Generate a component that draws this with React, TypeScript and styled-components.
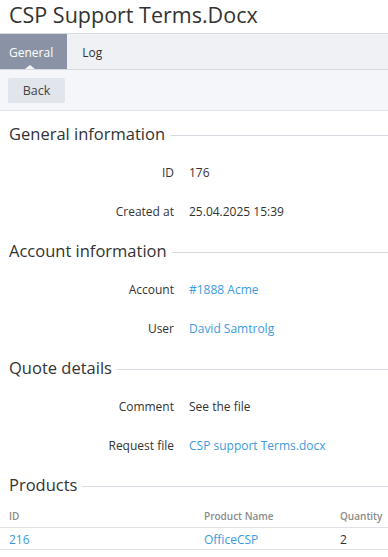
import styled, { createGlobalStyle } from 'styled-components';

const GlobalStyle = createGlobalStyle`
    body {
        margin: 0;
        background: #ffffff;
        font-family: "Open Sans", "Noto Sans", sans-serif;
        color: #333333;
    }
`;

const Page = styled.div`
    display: flex;
    flex-direction: column;
    width: 388px;
`;

const Title = styled.h1`
    margin: 0;
    height: 33px;
    padding-left: 9px;
    font-size: 21.5px;
    font-weight: 400;
    line-height: 30px;
    color: #333333;
`;

const TabBar = styled.nav`
    display: flex;
    height: 35px;
    background-color: #eff1f5;
    border-top: 1px solid #d6dae1;
    border-bottom: 1px solid #d6dae1;
`;

const Tab = styled.div<{ $active?: boolean }>`
    position: relative;
    display: flex;
    align-items: center;
    padding: 1px 14px 0 ${p => (p.$active ? '9px' : '15px')};
    font-size: 12px;
    color: ${p => (p.$active ? '#ffffff' : '#333333')};
    background-color: ${p => (p.$active ? '#8a93a5' : 'transparent')};

    &::after {
        content: '';
        display: ${p => (p.$active ? 'block' : 'none')};
        position: absolute;
        left: 25px;
        bottom: 0;
        border-left: 5px solid transparent;
        border-right: 5px solid transparent;
        border-bottom: 4px solid #f5f6f9;
    }
`;

const Toolbar = styled.div`
    display: flex;
    align-items: center;
    height: 40px;
    padding-left: 8px;
    background-color: #f5f6f9;
    border-bottom: 1px solid #e0e3e9;
`;

const Button = styled.button`
    height: 25px;
    width: 57px;
    border: none;
    border-radius: 2px;
    background-color: #e1e5ec;
    font-family: inherit;
    font-size: 12.5px;
    color: #444444;
    cursor: pointer;
`;

const Content = styled.div`
    display: flex;
    flex-direction: column;
    padding-top: 3px;
`;

const SectionTitle = styled.h2`
    display: flex;
    align-items: center;
    gap: 5px;
    margin: 0;
    height: 39px;
    padding-left: 9px;
    font-size: 16.5px;
    font-weight: 400;
    color: #333333;

    &::after {
        content: '';
        flex: 1;
        height: 1px;
        margin-top: 3px;
        background-color: #d6dae1;
    }
`;

const Row = styled.div`
    display: grid;
    grid-template-columns: 174px 1fr;
    column-gap: 15px;
    align-items: center;
    height: 39px;
    font-size: 12px;
`;

const Label = styled.span`
    text-align: right;
    color: #333333;
`;

const Value = styled.span`
    color: #333333;
`;

const Link = styled.a`
    color: #3d9be0;
    text-decoration: none;
`;

const Table = styled.div`
    display: flex;
    flex-direction: column;
`;

const TableRow = styled.div<{ $head?: boolean }>`
    display: grid;
    grid-template-columns: 195px 136px 1fr;
    align-items: center;
    height: ${p => (p.$head ? '23px' : '20px')};
    padding-left: 9px;
    padding-top: ${p => (p.$head ? '0' : '1px')};
    border-bottom: 1px solid #dfe2e7;
    font-size: ${p => (p.$head ? '10px' : '12px')};
    font-weight: ${p => (p.$head ? 600 : 400)};
    color: ${p => (p.$head ? '#8c8c8c' : '#333333')};
`;

const fields: { section: string; rows: { label: string; value: string; link?: boolean }[] }[] = [
    {
        section: 'General information',
        rows: [
            { label: 'ID', value: '176' },
            { label: 'Created at', value: '25.04.2025 15:39' },
        ],
    },
    {
        section: 'Account information',
        rows: [
            { label: 'Account', value: '#1888 Acme', link: true },
            { label: 'User', value: 'David Samtrolg', link: true },
        ],
    },
    {
        section: 'Quote details',
        rows: [
            { label: 'Comment', value: 'See the file' },
            { label: 'Request file', value: 'CSP support Terms.docx', link: true },
        ],
    },
];

export default function App() {
    return (
        <Page>
            <GlobalStyle />
            <Title>CSP Support Terms.Docx</Title>
            <TabBar>
                <Tab $active>General</Tab>
                <Tab>Log</Tab>
            </TabBar>
            <Toolbar>
                <Button>Back</Button>
            </Toolbar>
            <Content>
                {fields.map(group => (
                    <div key={group.section}>
                        <SectionTitle>{group.section}</SectionTitle>
                        {group.rows.map(row => (
                            <Row key={row.label}>
                                <Label>{row.label}</Label>
                                {row.link ? <Link href="#">{row.value}</Link> : <Value>{row.value}</Value>}
                            </Row>
                        ))}
                    </div>
                ))}
                <SectionTitle>Products</SectionTitle>
                <Table>
                    <TableRow $head>
                        <span>ID</span>
                        <span>Product Name</span>
                        <span>Quantity</span>
                    </TableRow>
                    <TableRow>
                        <Link href="#">216</Link>
                        <Link href="#">OfficeCSP</Link>
                        <span>2</span>
                    </TableRow>
                </Table>
            </Content>
        </Page>
    );
}
